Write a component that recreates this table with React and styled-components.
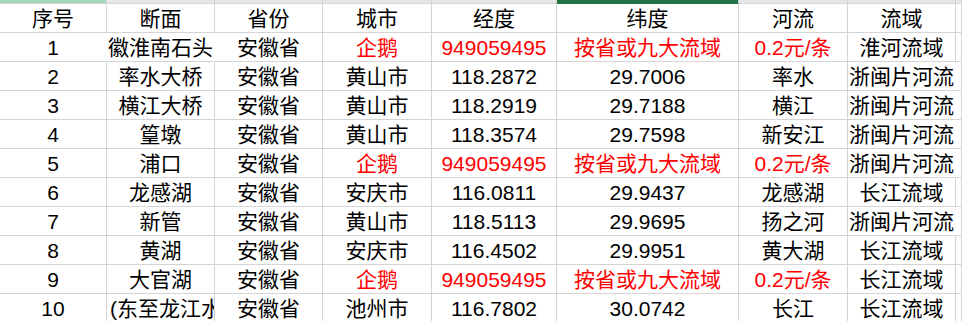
import React from 'react';
import styled, { createGlobalStyle } from 'styled-components';

const GlobalStyle = createGlobalStyle`
  html, body {
    margin: 0;
    padding: 0;
    background: #fff;
  }
  body {
    font-family: "Liberation Sans", "Noto Sans CJK SC", sans-serif;
  }
`;

const COLS = '107px 108px 108px 109px 125px 182px 109px 108px 1fr';
const LINE = '#d4d4d4';

const Sheet = styled.div`
  width: 962px;
  height: 321px;
  overflow: hidden;
  background: #fff;
`;

const HeadStrip = styled.div`
  display: grid;
  grid-template-columns: ${COLS};
  height: 4px;
`;

const ColHead = styled.div`
  box-sizing: border-box;
  height: 4px;
  background: ${(p) => (p.$tone === 'light' ? '#a3d7b9' : p.$tone === 'dark' ? '#217346' : '#e6e6e6')};
  border-right: 1px solid ${LINE};
  border-bottom: 1px solid ${(p) => (p.$tone === 'dark' ? '#217346' : LINE)};
`;

const Row = styled.div`
  display: grid;
  grid-template-columns: ${COLS};
  height: 29px;
`;

const Cell = styled.div`
  box-sizing: border-box;
  height: 29px;
  display: flex;
  align-items: center;
  justify-content: ${(p) => (p.$clip ? 'flex-start' : 'center')};
  padding-left: ${(p) => (p.$clip ? '3px' : '0')};
  overflow: ${(p) => (p.$clip ? 'hidden' : 'visible')};
  white-space: nowrap;
  font-size: 21px;
  line-height: 1;
  color: ${(p) => (p.$red ? '#ff0000' : '#000')};
  border-right: 1px solid ${(p) => (p.$open ? 'transparent' : LINE)};
  border-bottom: 1px solid ${LINE};
  position: relative;
  z-index: ${(p) => (p.$open ? 1 : 0)};
`;

const header = ['序号', '断面', '省份', '城市', '经度', '纬度', '河流', '流域'];

const RED = ['企鹅', '949059495', '按省或九大流域', '0.2元/条'];

const rows = [
  ['1', '徽淮南石头', '安徽省', ...RED, '淮河流域'],
  ['2', '率水大桥', '安徽省', '黄山市', '118.2872', '29.7006', '率水', '浙闽片河流'],
  ['3', '横江大桥', '安徽省', '黄山市', '118.2919', '29.7188', '横江', '浙闽片河流'],
  ['4', '篁墩', '安徽省', '黄山市', '118.3574', '29.7598', '新安江', '浙闽片河流'],
  ['5', '浦口', '安徽省', ...RED, '浙闽片河流'],
  ['6', '龙感湖', '安徽省', '安庆市', '116.0811', '29.9437', '龙感湖', '长江流域'],
  ['7', '新管', '安徽省', '黄山市', '118.5113', '29.9695', '扬之河', '浙闽片河流'],
  ['8', '黄湖', '安徽省', '安庆市', '116.4502', '29.9951', '黄大湖', '长江流域'],
  ['9', '大官湖', '安徽省', ...RED, '长江流域'],
  ['10', '(东至龙江水文站)', '安徽省', '池州市', '116.7802', '30.0742', '长江', '长江流域'],
];

// a cell's right gridline is hidden where its own or its neighbour's text spills over it
const isOpen = (row, i) => {
  const next = row[i + 1];
  if (i === 7 && row[i].length >= 5) return true;
  if (i === 1 && row[i].length === 5) return true;
  if (i === 0 && next && next.length === 5) return true;
  return false;
};

export default function App() {
  const tones = ['light', '', '', '', '', 'dark', '', '', ''];
  return (
    <Sheet>
      <GlobalStyle />
      <HeadStrip>
        {tones.map((t, i) => <ColHead key={i} $tone={t} />)}
      </HeadStrip>
      <Row>
        {header.map((h) => <Cell key={h}>{h}</Cell>)}
        <Cell />
      </Row>
      {rows.map((row) => (
        <Row key={row[0]}>
          {row.map((v, i) => (
            <Cell
              key={i}
              $red={RED.includes(v)}
              $open={isOpen(row, i)}
              $clip={i === 1 && v.length > 5}
            >
              {v}
            </Cell>
          ))}
          <Cell />
        </Row>
      ))}
    </Sheet>
  );
}
